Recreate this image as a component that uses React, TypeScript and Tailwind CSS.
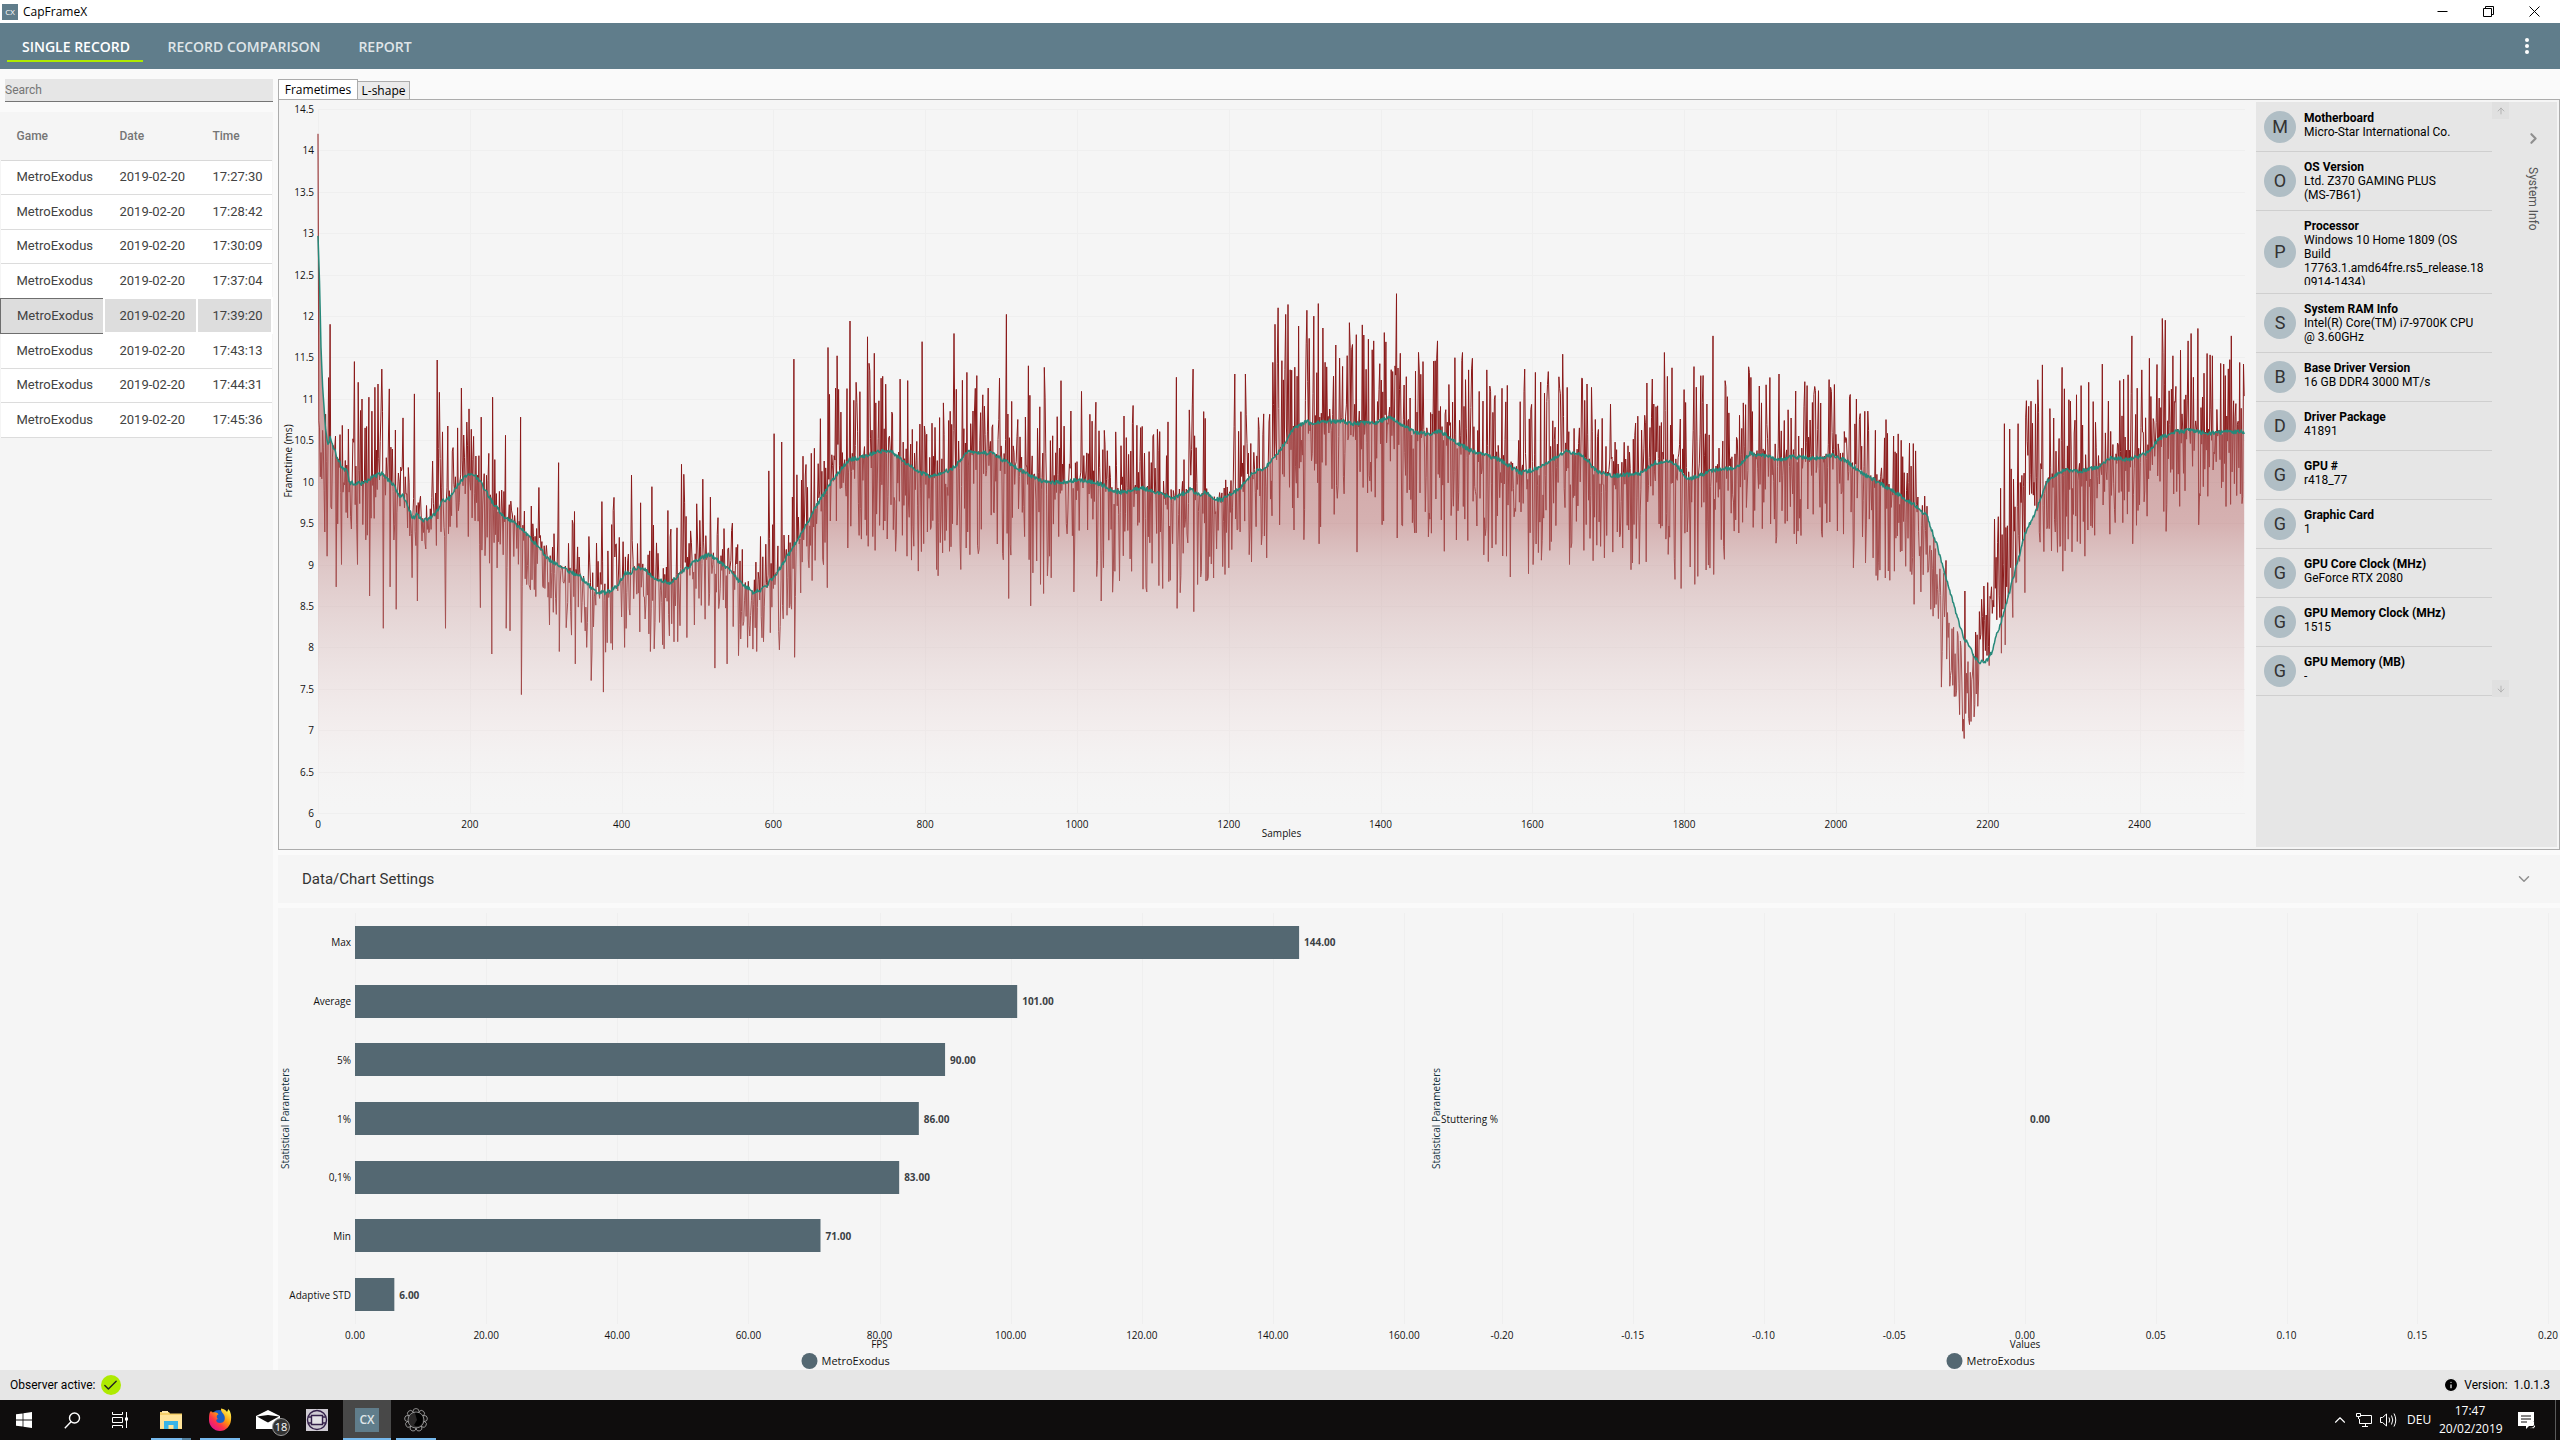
import { useLayoutEffect, useMemo, useRef, useState, type ReactNode } from "react";
import { ArrowDown, ArrowUp, Check, ChevronDown, ChevronRight, ChevronUp, Info } from "lucide-react";

type Point = [number, number];

type SystemInfo = {
  name: string;
  value: string;
};

type Bar = {
  label: string;
  value: number;
};

const records = ["17:27:30", "17:28:42", "17:30:09", "17:37:04", "17:39:20", "17:43:13", "17:44:31", "17:45:36"];
const selectedRecord = 4;

const systemInfos: SystemInfo[] = [
  { name: "Motherboard", value: "Micro-Star International Co." },
  { name: "OS Version", value: "Ltd. Z370 GAMING PLUS\n(MS-7B61)" },
  { name: "Processor", value: "Windows 10 Home 1809 (OS Build 17763.1.amd64fre.rs5_release.180914-1434)" },
  { name: "System RAM Info", value: "Intel(R) Core(TM) i7-9700K CPU @ 3.60GHz" },
  { name: "Base Driver Version", value: "16 GB DDR4 3000 MT/s" },
  { name: "Driver Package", value: "41891" },
  { name: "GPU #", value: "r418_77" },
  { name: "Graphic Card", value: "1" },
  { name: "GPU Core Clock (MHz)", value: "GeForce RTX 2080" },
  { name: "GPU Memory Clock (MHz)", value: "1515" },
  { name: "GPU Memory (MB)", value: "-" },
];

const statistics: Bar[] = [
  { label: "Max", value: 144 },
  { label: "Average", value: 101 },
  { label: "5%", value: 90 },
  { label: "1%", value: 86 },
  { label: "0,1%", value: 83 },
  { label: "Min", value: 71 },
  { label: "Adaptive STD", value: 6 },
];

// moving average as [sample, ms]
const average: Point[] = [
  [0, 12.98], [2, 12.4], [4, 11.6], [6, 11.15], [10, 10.65], [13, 10.43], [16, 10.55], [20, 10.42], [25, 10.3], [33, 10.15], [38, 10.14], [41, 9.99],
  [48, 9.98], [60, 9.98], [72, 10.06], [85, 10.1], [100, 9.95], [108, 9.82], [113, 9.83], [125, 9.55], [130, 9.61], [138, 9.52], [155, 9.61], [163, 9.76],
  [174, 9.8], [185, 9.98], [195, 10.07], [205, 10.1], [215, 9.98], [230, 9.75], [245, 9.58], [265, 9.46], [285, 9.27], [305, 9.05], [325, 8.94],
  [345, 8.86], [365, 8.67], [380, 8.66], [395, 8.75], [405, 8.9], [412, 8.9], [418, 8.96], [430, 8.95], [445, 8.82], [465, 8.78], [480, 8.92], [500, 9.06],
  [515, 9.12], [530, 9.03], [545, 8.9], [555, 8.8], [575, 8.65], [590, 8.74], [605, 8.9], [620, 9.12], [640, 9.43], [655, 9.68], [675, 9.98],
  [700, 10.27], [714, 10.29], [738, 10.36], [755, 10.37], [773, 10.24], [791, 10.12], [808, 10.06], [835, 10.15], [858, 10.37], [888, 10.34],
  [920, 10.17], [950, 10.02], [967, 9.99], [1009, 10.02], [1032, 9.97], [1047, 9.88], [1067, 9.87], [1085, 9.93], [1129, 9.8], [1150, 9.91],
  [1162, 9.83], [1170, 9.88], [1180, 9.79], [1191, 9.78], [1215, 9.92], [1232, 10.12], [1247, 10.16], [1268, 10.38], [1285, 10.64], [1303, 10.73],
  [1310, 10.68], [1320, 10.73], [1350, 10.73], [1362, 10.7], [1397, 10.72], [1412, 10.78], [1427, 10.7], [1444, 10.6], [1465, 10.57], [1477, 10.62],
  [1503, 10.46], [1521, 10.37], [1556, 10.27], [1585, 10.1], [1609, 10.17], [1637, 10.32], [1643, 10.37], [1667, 10.31], [1684, 10.13], [1708, 10.07],
  [1743, 10.1], [1761, 10.23], [1778, 10.26], [1790, 10.2], [1805, 10.03], [1814, 10.05], [1837, 10.14], [1870, 10.17], [1887, 10.34], [1907, 10.31],
  [1926, 10.27], [1943, 10.3], [1979, 10.28], [1996, 10.32], [2014, 10.25], [2032, 10.12], [2073, 9.9], [2102, 9.73], [2120, 9.58], [2132, 9.27],
  [2143, 8.91], [2155, 8.53], [2167, 8.15], [2179, 7.95], [2188, 7.81], [2199, 7.84], [2205, 7.93], [2210, 8.1], [2217, 8.29], [2226, 8.57],
  [2238, 8.99], [2249, 9.36], [2264, 9.66], [2279, 10.01], [2302, 10.15], [2320, 10.12], [2346, 10.18], [2361, 10.29], [2385, 10.27], [2408, 10.33],
  [2426, 10.52], [2444, 10.6], [2467, 10.62], [2491, 10.58], [2515, 10.6], [2538, 10.6],
];

// the raw signal falls and recovers earlier than its average
const rawDip: Point[] = [
  [2112, 9.6], [2122, 9.2], [2132, 8.75], [2145, 8.3], [2157, 7.75], [2170, 7.5], [2185, 7.8], [2195, 8.25], [2205, 8.7], [2215, 9.1], [2228, 9.5], [2250, 9.9], [2275, 10.1],
];

// noise reach above and below the centre as [sample, ms]
const reachUp: Point[] = [
  [0, 0.7], [40, 0.8], [60, 1], [90, 0.95], [130, 0.4], [145, 0.35], [160, 1], [175, 0.9], [205, 0.65], [240, 0.5], [300, 0.4], [350, 0.65], [400, 0.9],
  [480, 0.8], [560, 0.4], [600, 0.7], [625, 0.6], [655, 1.1], [700, 0.9], [750, 1.1], [800, 0.7], [850, 0.9], [960, 0.9], [1050, 0.8], [1130, 1],
  [1250, 0.8], [1270, 1.3], [1320, 1.2], [1430, 0.9], [1530, 0.9], [1600, 0.9], [1700, 0.8], [1800, 1.1], [1900, 0.9], [2000, 0.8], [2060, 0.7],
  [2110, 0.6], [2130, 0.45], [2210, 0.5], [2230, 1], [2290, 0.9], [2400, 0.9], [2538, 0.9],
];
const reachDown: Point[] = [
  [0, 0.9], [40, 0.6], [90, 0.8], [120, 0.7], [150, 0.3], [200, 0.7], [260, 0.7], [300, 0.5], [350, 0.8], [400, 0.6], [450, 0.8], [560, 0.6], [620, 0.7],
  [700, 0.9], [800, 1.1], [900, 1.1], [950, 1.2], [1000, 1.1], [1150, 1.1], [1220, 1], [1300, 1.2], [1400, 1.1], [1500, 1.2], [1700, 1], [1800, 1.1],
  [1900, 0.9], [2060, 1], [2110, 0.7], [2130, 0.5], [2200, 0.6], [2240, 0.9], [2300, 0.9], [2400, 0.8], [2538, 0.8],
];

const spikes = new Map<number, number>([
  [0, 14.2], [16, 11.9], [48, 11.45], [53, 11.2], [56, 10.86], [67, 11.02], [75, 11.14], [79, 11.18], [84, 11.36], [94, 11.12], [112, 10.77], [127, 11.06],
  [157, 11.47], [160, 11.08], [189, 11.13], [196, 10.72], [215, 10.78], [230, 11.02], [247, 10.56], [267, 10.78], [291, 9.93], [317, 10.23], [338, 9.64],
  [374, 9.76], [390, 9.81], [413, 10.08], [440, 9.94], [479, 10.21], [482, 10.09], [507, 10.03], [546, 9.5], [594, 10.13], [601, 10.58], [611, 10.48],
  [627, 11.48], [672, 11.62], [684, 11.52], [701, 11.94], [709, 11.2], [724, 11.75], [733, 11.55], [796, 11.69], [838, 11.79], [855, 11.32], [907, 12.02],
  [936, 11.4], [957, 11.38], [979, 11.22], [1006, 11.09], [1025, 10.96], [1074, 10.92], [1131, 11.26], [1153, 11.36], [1208, 11.3], [1222, 11.3],
  [1258, 11.44], [1261, 11.9], [1265, 12.1], [1275, 12.02], [1278, 12.14], [1292, 11.88], [1303, 12.07], [1312, 12], [1318, 12.15], [1341, 11.65],
  [1362, 11.6], [1391, 11.7], [1405, 11.8], [1421, 12.27], [1426, 11.55], [1475, 11.7], [1508, 11.56], [1521, 11.49], [1590, 11.36], [1604, 11.32],
  [1621, 11.33], [1640, 11.54], [1665, 11.25], [1758, 11.24], [1774, 11.56], [1813, 11.39], [1822, 11.28], [1838, 11.76], [1854, 11.22], [1886, 11.32],
  [1908, 11.17], [1925, 11.3], [1962, 11.16], [1972, 11.15], [1994, 11.09], [2018, 11.03], [2038, 10.85], [2066, 10.75], [2086, 10.5], [2102, 10.46],
  [2145, 9.05], [2170, 8.68], [2192, 8.58], [2209, 9.55], [2217, 9.92], [2222, 10.7], [2234, 10.03], [2240, 10.7], [2254, 10.91], [2266, 11.23],
  [2272, 11.41], [2298, 11.38], [2333, 11.2], [2351, 11.42], [2390, 11.76], [2403, 11.35], [2413, 11.49], [2430, 11.97], [2434, 11.95], [2444, 11.52],
  [2464, 11.7], [2468, 11.79], [2477, 11.85], [2496, 11.52], [2511, 11.42], [2521, 11.76], [2537, 11.42],
  [12, 9.1], [24, 8.73], [31, 9], [52, 9], [68, 8.62], [86, 8.23], [95, 8.73], [103, 8.46], [131, 8.56], [168, 8.23], [214, 8.48], [229, 7.92], [248, 8.23],
  [253, 8.2], [268, 7.43], [305, 8.27], [318, 7.95], [339, 7.8], [360, 7.6], [376, 7.46], [404, 8], [438, 7.95], [523, 7.75], [539, 7.8], [554, 7.9],
  [566, 8], [608, 7.97], [628, 7.88], [671, 8.72], [698, 9.2], [725, 9.22], [734, 9.17], [761, 9.16], [776, 9.1], [815, 8.94], [847, 8.94], [854, 9.2],
  [910, 8.59], [939, 8.5], [952, 8.76], [956, 8.65], [966, 8.84], [996, 8.67], [1032, 8.56], [1048, 8.92], [1091, 8.72], [1113, 8.71], [1123, 8.81],
  [1132, 8.47], [1154, 8.43], [1163, 8.85], [1195, 8.88], [1200, 8.96], [1299, 9.3], [1319, 9.25], [1369, 9.15], [1422, 9.32], [1484, 9.16], [1547, 9.2],
  [1566, 9.1], [1571, 8.85], [1623, 9.17], [1649, 9], [1668, 9.17], [1695, 9.08], [1732, 9.02], [1788, 8.82], [1796, 8.71], [1814, 8.76], [1839, 8.88],
  [1852, 9.22], [2023, 8.96], [2039, 9.02], [2055, 8.81], [2071, 8.81], [2103, 8.52], [2112, 8.67], [2125, 8.46], [2139, 7.52], [2151, 7.66],
  [2169, 6.9], [2175, 7.14], [2182, 7.16], [2202, 7.78], [2218, 7.93], [2223, 8.03], [2233, 8.36], [2249, 8.66], [2299, 8.92], [2328, 9.1], [2391, 9.25],
  [2435, 9.4], [2478, 9.48],
]);

function interpolate(points: Point[], x: number) {
  if (x <= points[0][0]) return points[0][1];
  for (let i = 1; i < points.length; i++) {
    const [x1, y1] = points[i];
    if (x <= x1) {
      const [x0, y0] = points[i - 1];
      return y0 + ((x - x0) / (x1 - x0)) * (y1 - y0);
    }
  }
  return points[points.length - 1][1];
}

function createRandom(seed: number) {
  let state = seed;
  return () => {
    state = (state * 1664525 + 1013904223) % 4294967296;
    return state / 4294967296;
  };
}

function buildSeries() {
  const random = createRandom(71);
  const frametimes: number[] = [];
  const averages: number[] = [];
  let sign = 1;
  for (let i = 0; i < 2539; i++) {
    const mean = interpolate(average, i);
    averages.push(mean + (random() - 0.5) * 0.05);
    const center = i < 12 ? 10.3 : i >= 2112 && i <= 2275 ? interpolate(rawDip, i) : mean;
    sign = random() < 0.66 ? -sign : sign;
    const reach = interpolate(sign > 0 ? reachUp : reachDown, i);
    const noise = sign * reach * 1.15 * Math.pow(random(), sign > 0 ? 1.8 : 1.4);
    frametimes.push(spikes.get(i) ?? center + noise);
  }
  return { frametimes, averages };
}

function toPath(values: number[], x: (i: number) => number, y: (v: number) => number) {
  return values.map((value, i) => `${i === 0 ? "M" : "L"}${x(i).toFixed(1)} ${y(value).toFixed(1)}`).join("");
}

function Measured({ label, children }: { label: string; children: (width: number, height: number) => ReactNode }) {
  const ref = useRef<HTMLDivElement>(null);
  const [size, setSize] = useState({ width: 0, height: 0 });

  useLayoutEffect(() => {
    const element = ref.current;
    if (!element) return;
    const update = () => setSize({ width: element.clientWidth, height: element.clientHeight });
    update();
    const observer = new ResizeObserver(update);
    observer.observe(element);
    return () => observer.disconnect();
  }, []);

  return (
    <div ref={ref} className="min-h-0 w-0 min-w-0 flex-1">
      {size.width > 0 && (
        <svg width={size.width} height={size.height} className="block overflow-visible font-['Open_Sans','Noto_Sans',sans-serif]" role="img" aria-label={label}>
          {children(size.width, size.height)}
        </svg>
      )}
    </div>
  );
}

function FrametimeChart() {
  const series = useMemo(buildSeries, []);

  return (
    <Measured label="Frametimes">
      {(width, height) => {
        const left = 39;
        const right = width - 11;
        const top = 9;
        const bottom = height - 36;
        const x = (sample: number) => left + (sample / 2539) * (right - left);
        const y = (ms: number) => bottom - ((ms - 6) / 8.5) * (bottom - top);
        const frametimePath = toPath(series.frametimes, x, y);
        const averagePath = toPath(series.averages, x, y);
        const yTicks = Array.from({ length: 18 }, (_, i) => 6 + i * 0.5);
        const xTicks = Array.from({ length: 13 }, (_, i) => i * 200);
        return (
          <>
            <defs>
              <linearGradient id="averageFill" gradientUnits="userSpaceOnUse" x1="0" x2="0" y1={y(13)} y2={y(6)}>
                <stop offset="0" stopColor="#a04040" stopOpacity="0.62" />
                <stop offset="0.33" stopColor="#b26767" stopOpacity="0.58" />
                <stop offset="0.5" stopColor="#b87272" stopOpacity="0.52" />
                <stop offset="0.57" stopColor="#c39191" stopOpacity="0.47" />
                <stop offset="0.71" stopColor="#d4b2b2" stopOpacity="0.36" />
                <stop offset="0.86" stopColor="#ebd2d2" stopOpacity="0.2" />
                <stop offset="1" stopColor="#f5f5f5" stopOpacity="0" />
              </linearGradient>
            </defs>
            {yTicks.map((tick) => (
              <g key={tick}>
                <line x1={left} x2={right} y1={Math.round(y(tick)) + 0.5} y2={Math.round(y(tick)) + 0.5} stroke="#efefef" />
                <text x={left - 4} y={y(tick) + 4} textAnchor="end" fontSize="10" fill="#111">{tick}</text>
              </g>
            ))}
            {xTicks.map((tick) => (
              <g key={tick}>
                <line x1={Math.round(x(tick)) + 0.5} x2={Math.round(x(tick)) + 0.5} y1={top} y2={bottom} stroke="#efefef" />
                <text x={x(tick)} y={bottom + 15} textAnchor="middle" fontSize="10" fill="#111">{tick}</text>
              </g>
            ))}
            <path d={frametimePath} fill="none" stroke="#8b1a1a" strokeWidth="1" strokeLinejoin="bevel" />
            <path d={`${averagePath}L${x(2538).toFixed(1)} ${bottom}L${left} ${bottom}Z`} fill="url(#averageFill)" />
            <path d={averagePath} fill="none" stroke="#26897a" strokeWidth="1.5" strokeLinejoin="round" />
            <text x={(left + right) / 2} y={bottom + 24} textAnchor="middle" fontSize="10" fill="#111">Samples</text>
            <text transform={`translate(13 ${(top + bottom) / 2}) rotate(-90)`} textAnchor="middle" fontSize="10" fill="#111">Frametime (ms)</text>
          </>
        );
      }}
    </Measured>
  );
}

type BarChartProps = {
  bars: Bar[];
  axis: string;
  ticks: number[];
  titleLeft: number;
  plotLeft: number;
  insetRight: number;
};

function BarChart({ bars, axis, ticks, titleLeft, plotLeft, insetRight }: BarChartProps) {
  return (
    <Measured label={axis}>
      {(width, height) => {
        const top = 5;
        const bottom = height - 46;
        const min = ticks[0];
        const max = ticks[ticks.length - 1];
        const x = (value: number) => plotLeft + ((value - min) / (max - min)) * (width - insetRight - plotLeft);
        const step = (bottom - top) / bars.length;
        const barHeight = 33;
        return (
          <>
            {ticks.map((tick) => (
              <g key={tick}>
                <line x1={Math.round(x(tick)) + 0.5} x2={Math.round(x(tick)) + 0.5} y1={top} y2={bottom} stroke="#efefef" />
                <text x={x(tick)} y={bottom + 15} textAnchor="middle" fontSize="10" fill="#111">{tick.toFixed(2)}</text>
              </g>
            ))}
            {bars.map((bar, i) => {
              const center = top + step * (i + 0.5);
              return (
                <g key={bar.label}>
                  <rect x={x(0)} y={Math.round(center - barHeight / 2)} width={x(bar.value) - x(0)} height={barHeight} fill="#546872" />
                  <text x={plotLeft - 4} y={center + 4} textAnchor="end" fontSize="10" fill="#111">{bar.label}</text>
                  <text x={x(bar.value) + 5} y={center + 4} fontSize="10" fontWeight="700" fill="#3c4145">{bar.value.toFixed(2)}</text>
                </g>
              );
            })}
            <text x={(plotLeft + width - insetRight) / 2} y={height - 22} textAnchor="middle" fontSize="10" fill="#111">{axis}</text>
            <text transform={`translate(${titleLeft} ${(top + bottom) / 2}) rotate(-90)`} textAnchor="middle" fontSize="10" fill="#0f2f3a">Statistical Parameters</text>
            <circle cx={width / 2 - 37} cy={height - 9} r="8" fill="#546872" />
            <text x={width / 2 - 25} y={height - 5} fontSize="11" fill="#111">MetroExodus</text>
          </>
        );
      }}
    </Measured>
  );
}

function TitleBar() {
  return (
    <header className="flex h-[23px] items-center bg-white pl-[2px] font-['Open_Sans','Noto_Sans',sans-serif] text-[12px] text-black">
      <span className="flex h-4 w-4 items-center justify-center bg-[#607d8b] text-[8px] text-white">CX</span>
      <span className="ml-[5px]">CapFrameX</span>
      <div className="ml-auto flex pr-[3px]">
        <button type="button" aria-label="Minimize" className="flex h-[22px] w-[46px] items-center justify-center">
          <svg width="11" height="11" viewBox="0 0 11 11" stroke="#000"><path d="M0.5 5.5H10.5" /></svg>
        </button>
        <button type="button" aria-label="Restore" className="flex h-[22px] w-[46px] items-center justify-center">
          <svg width="11" height="11" viewBox="0 0 11 11" fill="none" stroke="#000"><path d="M0.5 2.5H8.5V10.5H0.5ZM2.5 2.5V0.5H10.5V8.5H8.5" /></svg>
        </button>
        <button type="button" aria-label="Close" className="flex h-[22px] w-[46px] items-center justify-center">
          <svg width="11" height="11" viewBox="0 0 11 11" stroke="#000"><path d="M0.5 0.5L10.5 10.5M10.5 0.5L0.5 10.5" /></svg>
        </button>
      </div>
    </header>
  );
}

function NavBar() {
  return (
    <nav className="flex h-[46px] items-center bg-[#607d8b] pl-[7px] pr-[22px] font-['Open_Sans','Noto_Sans',sans-serif] text-[14px] font-semibold text-[#dfe5e8]">
      <button type="button" className="h-[39px] w-[136px] self-start border-b-2 border-[#aeea00] pl-[2px] pt-[9px] text-white">SINGLE RECORD</button>
      <button type="button" className="h-[46px] w-[200px] pl-[2px]">RECORD COMPARISON</button>
      <button type="button" className="h-[46px] w-[84px]">REPORT</button>
      <button type="button" aria-label="Menu" className="ml-auto flex h-8 w-[22px] items-center justify-center">
        <svg width="6" height="18" viewBox="0 0 6 18" fill="#fff"><circle cx="3" cy="3" r="2" /><circle cx="3" cy="9" r="2" /><circle cx="3" cy="15" r="2" /></svg>
      </button>
    </nav>
  );
}

function RecordList() {
  return (
    <aside className="flex w-[273px] shrink-0 flex-col pl-0 pt-[10px]">
      <div className="pl-[5px]">
        <input type="text" aria-label="Search" placeholder="Search" className="block h-[23px] w-full border-b border-[#757575] bg-[#e6e6e6] text-[12px] leading-4 text-[#444] outline-none placeholder:text-[#757575]" />
      </div>
      <div className="mt-[10px] flex-1 bg-[#f5f5f5]">
        <table className="w-full table-fixed border-collapse text-left text-[13px] text-[#424242]">
          <thead>
            <tr className="h-[48px] border-b border-[#d8d8d8] text-[12px] text-[#757575]">
              <th className="w-[103px] pl-4 font-medium">Game</th>
              <th className="w-[93px] pl-4 font-medium">Date</th>
              <th className="pl-4 font-medium">Time</th>
            </tr>
          </thead>
          <tbody>
            {records.map((time, i) =>
              i === selectedRecord ? (
                <tr key={time} className="h-[35px] border-b border-[#dcdcdc] bg-white">
                  <td className="border border-[#6e6e6e] bg-[#dddddd] pl-4">MetroExodus</td>
                  <td className="border-2 border-white bg-[#dddddd] pl-[15px]">2019-02-20</td>
                  <td className="border-2 border-white bg-[#dddddd] pl-[15px]">{time}</td>
                </tr>
              ) : (
                <tr key={time} className="h-[35px] border-b border-[#dcdcdc] bg-white odd:h-[34px]">
                  <td className="pl-4">MetroExodus</td>
                  <td className="pl-4">2019-02-20</td>
                  <td className="pl-4">{time}</td>
                </tr>
              ),
            )}
          </tbody>
        </table>
      </div>
    </aside>
  );
}

function SystemInfoPanel() {
  return (
    <section className="my-[2px] mr-[2px] flex w-[301px] shrink-0 bg-[#e6e6e6] text-[12px] leading-[14px] text-black">
      <ul className="w-[236px] pt-px">
        {systemInfos.map((info) => (
          <li key={info.name} className="flex gap-2 border-b border-[#cfcfcf] px-2 py-2">
            <span className="flex h-8 w-8 shrink-0 items-center justify-center self-center rounded-full bg-[#b0bec5] text-[18px] text-[#333]">{info.name[0]}</span>
            <div className="max-h-[66px] min-w-0 overflow-hidden">
              <p className="font-bold">{info.name}</p>
              <p className="w-[180px] whitespace-pre-line [overflow-wrap:anywhere]">{info.value}</p>
            </div>
          </li>
        ))}
      </ul>
      <div className="flex h-[595px] w-[17px] flex-col justify-between text-[#a9a9a9]">
        <button type="button" aria-label="Scroll up" className="flex h-[17px] items-center justify-center bg-[#e0e0e0]"><ArrowUp size={10} /></button>
        <button type="button" aria-label="Scroll down" className="flex h-[17px] items-center justify-center bg-[#e0e0e0]"><ArrowDown size={10} /></button>
      </div>
      <button type="button" className="flex flex-1 flex-col items-center gap-5 pt-7 text-[12px] text-[#555]">
        <ChevronRight size={17} strokeWidth={3} className="text-[#8f8f8f]" />
        <span className="[writing-mode:vertical-rl]">System Info</span>
      </button>
    </section>
  );
}

function Tabs() {
  return (
    <div role="tablist" className="flex items-end pt-[10px] font-['Open_Sans','Noto_Sans',sans-serif] text-[12px] leading-[18px] text-black">
      <button type="button" role="tab" aria-selected="true" className="h-[20px] w-[80px] border border-b-0 border-[#acacac] bg-white">Frametimes</button>
      <button type="button" role="tab" aria-selected="false" className="h-[18px] w-[52px] border border-b-0 border-l-0 border-[#acacac] bg-[#ebebeb] leading-[16px]">L-shape</button>
    </div>
  );
}

function StatusBar() {
  return (
    <footer className="flex h-[30px] items-center bg-[#e6e6e6] pl-[10px] pr-[10px] text-[12px] text-black">
      <span>Observer active:</span>
      <span className="ml-[5px] flex h-5 w-5 items-center justify-center rounded-full bg-[#aeea00]"><Check size={17} strokeWidth={2} color="#222" /></span>
      <Info size={16} fill="#000" color="#e6e6e6" className="ml-auto" />
      <span className="ml-[5px]">Version:&nbsp; 1.0.1.3</span>
    </footer>
  );
}

function Taskbar() {
  return (
    <footer className="flex h-[40px] items-stretch bg-[#0f0d0d] font-['Open_Sans','Noto_Sans',sans-serif] text-[12px] text-white">
      <button type="button" aria-label="Start" className="flex w-[48px] items-center justify-center">
        <svg width="16" height="16" viewBox="0 0 16 16" fill="#fff"><path d="M0 2.3L6.6 1.4V7.6H0ZM7.4 1.2L16 0V7.6H7.4ZM0 8.4H6.6V14.6L0 13.7ZM7.4 8.4H16V16L7.4 14.8Z" /></svg>
      </button>
      <button type="button" aria-label="Search" className="flex w-[48px] items-center justify-center">
        <svg width="17" height="17" viewBox="0 0 17 17" fill="none" stroke="#fff" strokeWidth="1.4"><circle cx="10.5" cy="6" r="5" /><path d="M7 9.8L0.8 16.2" /></svg>
      </button>
      <button type="button" aria-label="Task view" className="flex w-[48px] items-center justify-center">
        <svg width="17" height="16" viewBox="0 0 17 16" fill="none" stroke="#fff"><path d="M0.5 0V2.5H10.5V0M0.5 5.5H10.5V10.5H0.5ZM0.5 16V13.5H10.5V16M14.5 0V16" /><path d="M13 5.5H16V8.5H13Z" fill="#fff" stroke="none" /></svg>
      </button>
      <button type="button" aria-label="Explorer" className="ml-[3px] flex w-[48px] items-center justify-center">
        <svg width="40" height="40" viewBox="0 0 40 40">
          <path d="M9 12H18L19 13.5H31V29H9Z" fill="#f5cf6a" />
          <path d="M11 11H17V13H11Z" fill="#fbe6a8" />
          <path d="M9 15H31V28.5H9Z" fill="#ffe49a" />
          <path d="M13 29V21H27V29H22.5V25H17.5V29Z" fill="#38b4e8" />
          <path d="M0 38H31V40H0Z" fill="#76b9ed" />
          <path d="M31 38H40V40H31Z" fill="#52809f" />
        </svg>
      </button>
      <button type="button" aria-label="Firefox" className="ml-px flex w-[48px] items-center justify-center">
        <svg width="40" height="40" viewBox="0 0 40 40">
          <defs>
            <linearGradient id="fox" x1="0.9" y1="0.1" x2="0.2" y2="0.9">
              <stop offset="0" stopColor="#fff44f" />
              <stop offset="0.4" stopColor="#ff980e" />
              <stop offset="0.7" stopColor="#ff3647" />
              <stop offset="1" stopColor="#e31587" />
            </linearGradient>
          </defs>
          <circle cx="19" cy="18" r="8" fill="#1b5fc4" />
          <path d="M10 12C11 10 12 12 13 12.5C16 11.5 18 13 18.5 14.5C16 15 16.5 18 18 19C15 19 16 23 20 23C24 23 25.5 20 24.5 16C23.5 13 20.5 12 21 8.5C24 9 26 10 27 12L28.5 9C31 12 31.5 16 31 20C30.5 26 26 31 20 31C14 31 9 26 9 20C9 17 9 14 10 12Z" fill="url(#fox)" />
          <path d="M0 38H40V40H0Z" fill="#76b9ed" />
        </svg>
      </button>
      <button type="button" aria-label="Mail" className="relative flex w-[48px] items-center justify-center">
        <svg width="24" height="20" viewBox="0 0 24 20" fill="#fff"><path d="M0 6L12 0L24 6V19H0Z" /><path d="M1 6.5L12 5L23 6.5L12 12.5L9 11Z" fill="#0f0d0d" /></svg>
        <span className="absolute left-7 top-[18px] flex h-[18px] w-[18px] items-center justify-center rounded-full border border-[#999] bg-[#333] text-[11px]">18</span>
      </button>
      <button type="button" aria-label="Hardware monitor" className="flex w-[49px] items-center justify-center">
        <svg width="22" height="22" viewBox="0 0 22 22" fill="none" stroke="#34204a" strokeWidth="1.4"><path d="M0 0H22V22H0Z" fill="#cfcbd3" stroke="none" /><circle cx="11" cy="11" r="9.5" /><path d="M5.5 6.5H16.5V15.5H5.5Z" fill="#e4e2e6" /><path d="M2 8H5M2 14H5M17 8H20M17 14H20" /></svg>
      </button>
      <button type="button" className="ml-[2px] flex w-[48px] items-center justify-center border-b-2 border-[#76b9ed] bg-[#484848] pt-[2px]">
        <span className="flex h-6 w-6 items-center justify-center bg-[#607d8b] text-[12px] font-semibold text-[#dfe5e8]">CX</span>
      </button>
      <button type="button" aria-label="Recorder" className="ml-[5px] flex w-[40px] items-center justify-center">
        <svg width="40" height="40" viewBox="0 0 40 40" fill="none" stroke="#a5a5a5" strokeWidth="0.8">
          {[0, 40, 80, 120, 160, 200, 240, 280, 320].map((angle) => (
            <circle key={angle} cx="20" cy="11.5" r="3" transform={`rotate(${angle} 20 20)`} />
          ))}
          <circle cx="20" cy="20" r="8" fill="#2a2828" />
          <path d="M19 13C25 12 28 17 26.5 22C25 27 20 27 18 25L21 20Z" fill="#000" stroke="none" />
          <path d="M0 38H40V40H0Z" fill="#76b9ed" stroke="none" />
        </svg>
      </button>
      <div className="ml-auto flex items-center">
        <button type="button" aria-label="Show hidden icons"><ChevronUp size={18} strokeWidth={1.5} /></button>
        <svg width="16" height="14" viewBox="0 0 16 14" fill="none" stroke="#fff" className="ml-[7px]"><path d="M4.5 2.5H15.5V10.5H3.5V6M9.5 10.5V13M6 13.5H12M0.5 0.5H4.5V3.5H0.5ZM2.5 3.5V6" /></svg>
        <svg width="17" height="14" viewBox="0 0 17 14" fill="none" stroke="#fff" className="ml-[8px]"><path d="M0.5 4.5H2.5L6.5 1V13L2.5 9.5H0.5ZM9 4.5Q10.5 7 9 9.5M11.5 2.5Q14 7 11.5 11.5M14 0.5Q17.5 7 14 13.5" /></svg>
        <span className="ml-[10px] w-[24px]">DEU</span>
        <time className="ml-[8px] w-[62px] text-center leading-[18px]">17:47<br />20/02/2019</time>
        <button type="button" aria-label="Notifications" className="ml-[17px]">
          <svg width="17" height="17" viewBox="0 0 17 17"><path d="M0 0H16V14H11L8 17V14H0Z" fill="#fff" /><path d="M3 4H13M3 7H13M3 10H9" stroke="#0f0d0d" /><path d="M16 9A4 4 0 1 1 11 15A4 4 0 0 0 16 9Z" fill="#fff" stroke="#0f0d0d" strokeWidth="0.8" /></svg>
        </button>
        <span className="ml-[20px] mr-[4px] h-[40px] w-px bg-[#5a5a5a]" />
      </div>
    </footer>
  );
}

export default function App() {
  return (
    <div className="flex h-screen flex-col overflow-hidden bg-[#fafafa] font-[Roboto,sans-serif]">
      <TitleBar />
      <NavBar />
      <div className="flex min-h-0 flex-1 gap-[5px]">
        <RecordList />
        <main className="flex min-w-0 flex-1 flex-col">
          <Tabs />
          <div className="flex min-h-0 flex-[749_749_0%] border border-[#acacac] bg-[#f5f5f5]">
            <FrametimeChart />
            <SystemInfoPanel />
          </div>
          <button type="button" aria-expanded="false" className="mt-[5px] flex h-[48px] shrink-0 items-center justify-between bg-[#f5f5f5] pl-6 pr-[27px] text-[15px] text-[#333]">
            Data/Chart Settings
            <ChevronDown size={18} strokeWidth={2} className="text-[#8f8f8f]" />
          </button>
          <div className="mt-[5px] flex min-h-0 flex-[462_462_0%] gap-2 bg-[#f5f5f5]">
            <BarChart bars={statistics} axis="FPS" ticks={[0, 20, 40, 60, 80, 100, 120, 140, 160]} titleLeft={11} plotLeft={77} insetRight={11} />
            <BarChart bars={[{ label: "Stuttering %", value: 0 }]} axis="Values" ticks={[-0.2, -0.15, -0.1, -0.05, 0, 0.05, 0.1, 0.15, 0.2]} titleLeft={17} plotLeft={79} insetRight={12} />
          </div>
        </main>
      </div>
      <StatusBar />
      <Taskbar />
    </div>
  );
}
